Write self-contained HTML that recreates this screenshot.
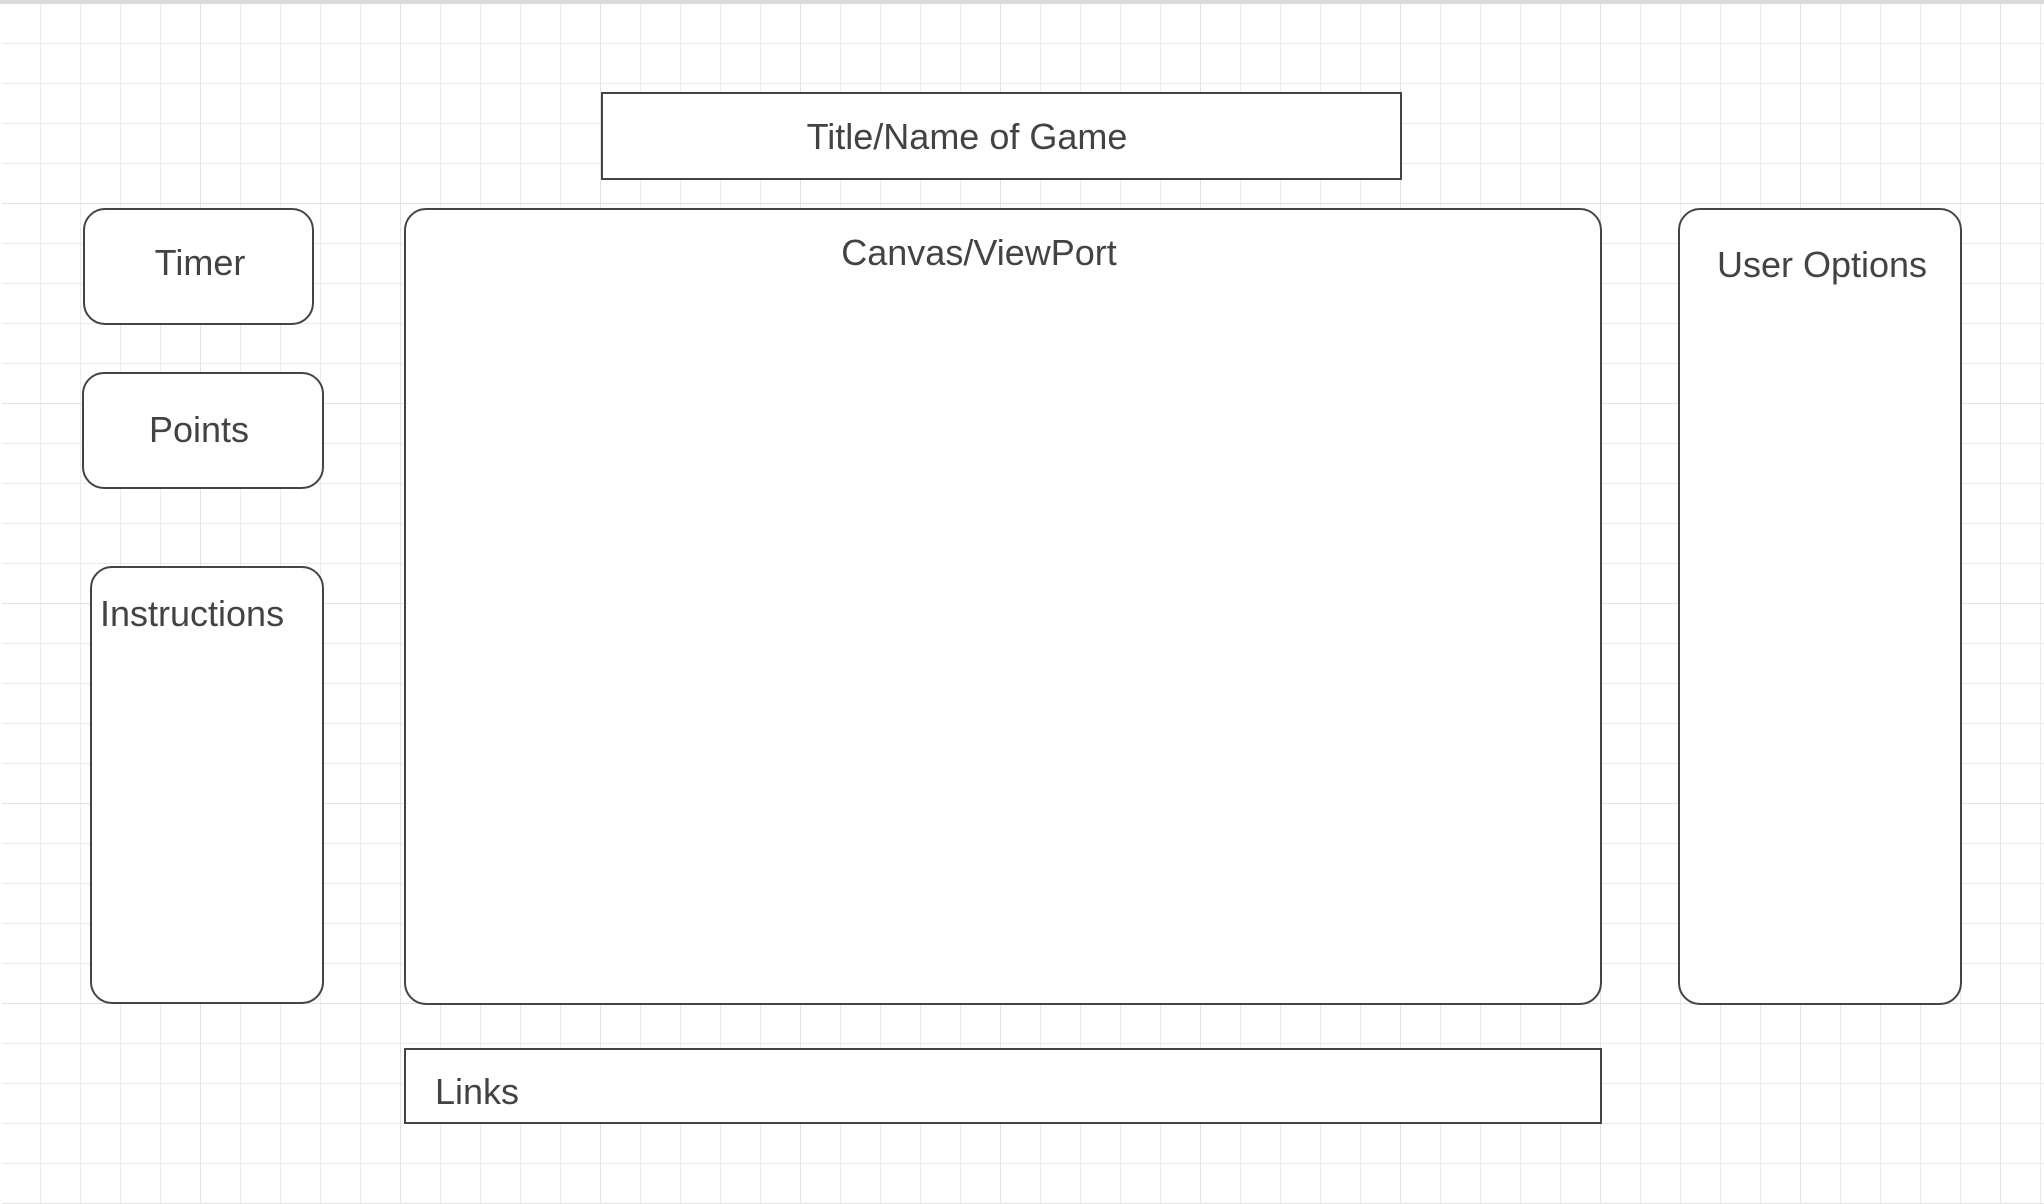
<!DOCTYPE html>
<html><head><meta charset="utf-8"><style>
html,body{margin:0;padding:0;}
body{width:2044px;height:1204px;position:relative;overflow:hidden;background:#fff;font-family:"Liberation Sans",Arial,sans-serif;color:#434343;}
.grid{position:absolute;left:2px;top:4px;right:0;bottom:0;
background-image:
linear-gradient(to right, transparent 199px, #e2e2e2 199px, #e2e2e2 200px, transparent 200px),
linear-gradient(to bottom, transparent 199px, #e2e2e2 199px, #e2e2e2 200px, transparent 200px),
linear-gradient(to right, transparent 39px, #ebebeb 39px, #ebebeb 40px, transparent 40px),
linear-gradient(to bottom, transparent 39px, #ebebeb 39px, #ebebeb 40px, transparent 40px);
background-size:200px 200px,200px 200px,40px 40px,40px 40px;
background-position:-1px 0,0 0,-1px 0,0 0;}
.topbar{position:absolute;left:0;top:0;width:2044px;height:4px;background:#dadada;}
.b{position:absolute;box-sizing:border-box;border:2px solid #444;background:#fff;}
.t{position:absolute;font-size:36px;line-height:36px;white-space:nowrap;}
.c{transform:translateX(-50%);}
</style></head><body>
<div class="topbar"></div>
<div class="grid"></div>

<div class="b" style="left:601px;top:92px;width:801px;height:88px;"></div>
<div class="t c" style="left:967px;top:119px;">Title/Name of Game</div>

<div class="b" style="left:83px;top:208px;width:231px;height:117px;border-radius:22px;"></div>
<div class="t c" style="left:200px;top:245px;">Timer</div>

<div class="b" style="left:82px;top:372px;width:242px;height:117px;border-radius:22px;"></div>
<div class="t c" style="left:199px;top:412px;">Points</div>

<div class="b" style="left:90px;top:566px;width:234px;height:438px;border-radius:22px;"></div>
<div class="t" style="left:100px;top:596px;">Instructions</div>

<div class="b" style="left:404px;top:208px;width:1198px;height:797px;border-radius:22px;"></div>
<div class="t c" style="left:979px;top:235px;">Canvas/ViewPort</div>

<div class="b" style="left:1678px;top:208px;width:284px;height:797px;border-radius:22px;"></div>
<div class="t c" style="left:1822px;top:247px;">User Options</div>

<div class="b" style="left:404px;top:1048px;width:1198px;height:76px;"></div>
<div class="t" style="left:435px;top:1074px;">Links</div>
</body></html>
